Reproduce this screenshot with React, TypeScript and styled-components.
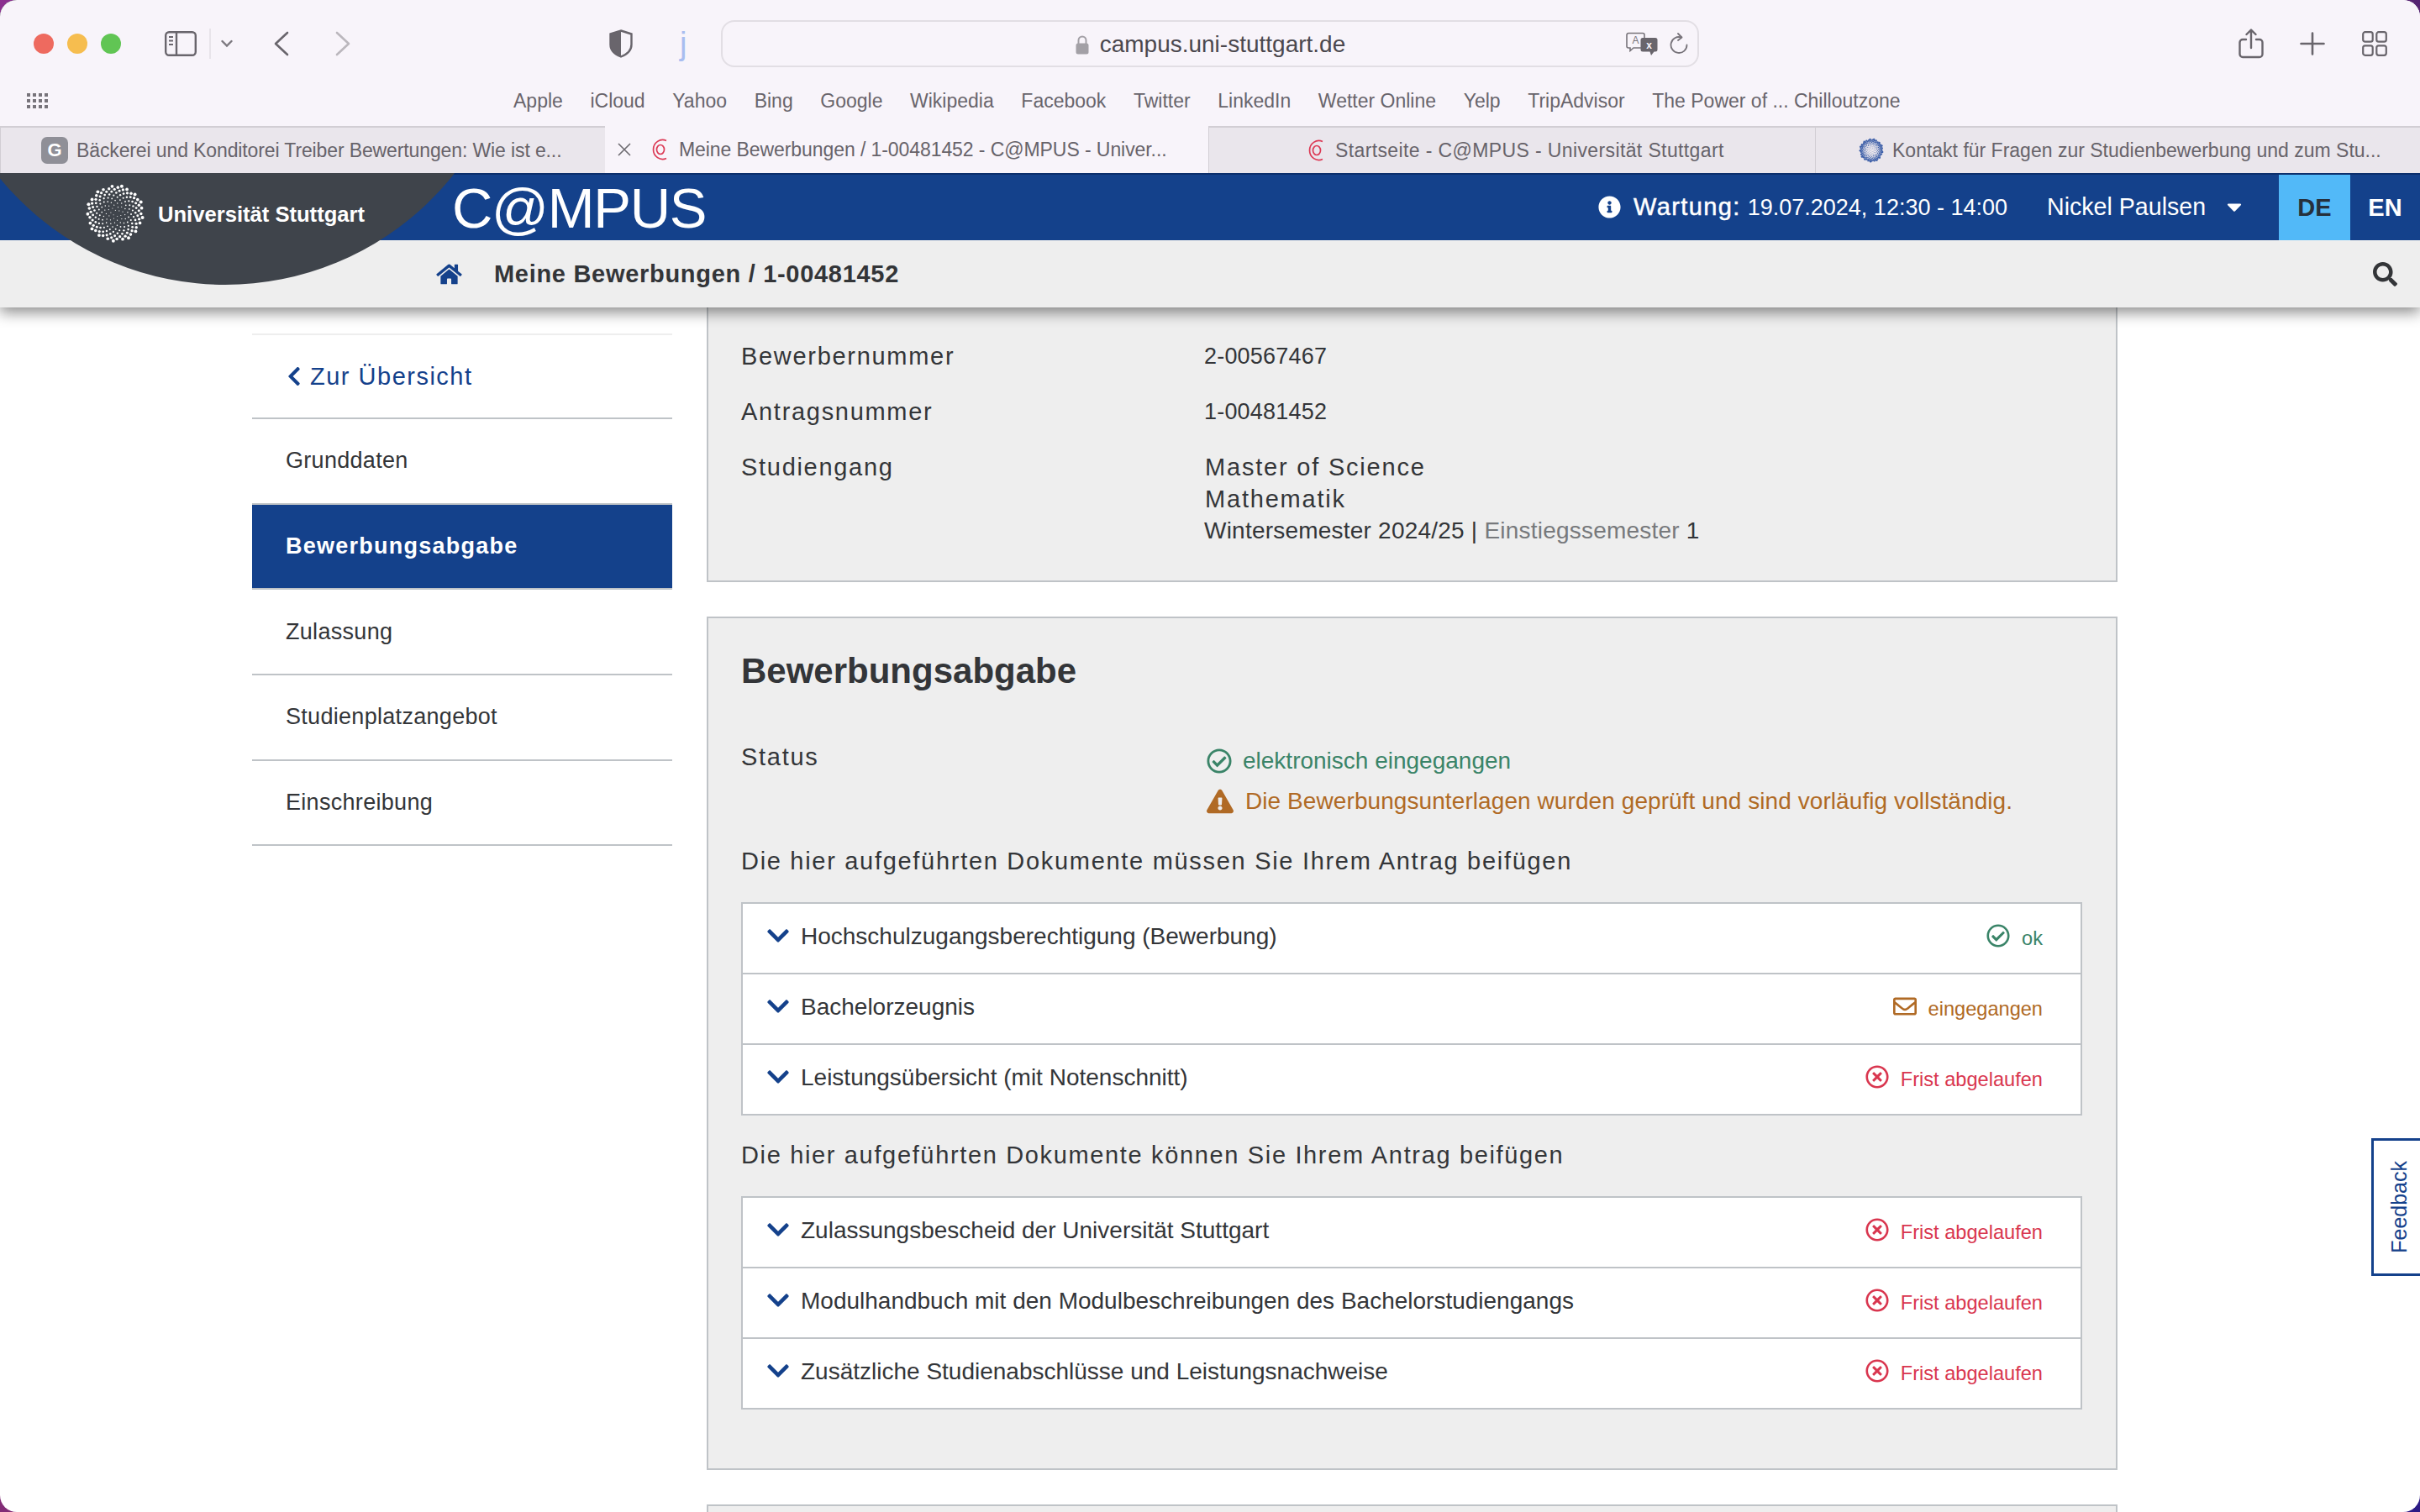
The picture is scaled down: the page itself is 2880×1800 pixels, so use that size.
import React from "react";
import styled, { createGlobalStyle } from "styled-components";
import {
  FaHome,
  FaInfoCircle,
  FaSearch,
  FaCaretDown,
  FaChevronDown,
  FaChevronLeft,
  FaExclamationTriangle,
  FaRegCheckCircle,
  FaRegTimesCircle,
  FaRegEnvelope,
} from "react-icons/fa";

const BLUE = "#14418b";
const LINE = "#bfc3c7";
const GREEN = "#3a8468";
const ORANGE = "#b06a25";
const RED = "#d9364f";
const TEXT = "#333538";
const SAFARI_ICON = "#69656c";

type Tone = "ok" | "warn" | "bad";
const toneColor = (t: Tone) => (t === "ok" ? GREEN : t === "warn" ? ORANGE : RED);

const GlobalStyle = createGlobalStyle`
  html, body {
    margin: 0;
    padding: 0;
    width: 2880px;
    height: 1800px;
    overflow: hidden;
    background: linear-gradient(120deg, #8b2f8f 0%, #7a2a60 50%, #2b1a85 100%);
  }
  * { box-sizing: border-box; }
`;

const Window = styled.div`
  position: relative;
  width: 2880px;
  height: 1800px;
  border-radius: 20px;
  overflow: hidden;
  background: #fff;
  display: flex;
  flex-direction: column;
  font-family: "Liberation Sans", Arial, sans-serif;
  color: ${TEXT};
`;

/* safari chrome */
const Chrome = styled.div`
  position: relative;
  z-index: 3;
  background: #f8f4fa;
`;
const ToolRow = styled.div`
  height: 104px;
  display: flex;
  align-items: center;
  padding-left: 40px;
`;
const Lights = styled.div`
  display: flex;
  gap: 16px;
  width: 156px;
`;
const Light = styled.span<{ $color: string }>`
  width: 24px;
  height: 24px;
  border-radius: 50%;
  background: ${({ $color }) => $color};
`;
const Slot = styled.div<{ $x: number }>`
  display: flex;
  align-items: center;
  margin-left: ${({ $x }) => $x}px;
`;
const Divider = styled.span`
  width: 2px;
  height: 36px;
  background: #e8e4ea;
`;
const ExtensionJ = styled.span`
  font-size: 38px;
  line-height: 1;
  color: #a9bdf0;
  font-family: "Liberation Sans", sans-serif;
`;
const UrlBar = styled.div`
  width: 1164px;
  height: 56px;
  margin-left: 41px;
  border: 2.5px solid #e2dee4;
  border-radius: 16px;
  display: grid;
  grid-template-columns: 1fr auto 1fr;
  align-items: center;
`;
const UrlCenter = styled.div`
  display: flex;
  align-items: center;
  gap: 13px;
  padding-top: 2px;
  font-size: 28px;
  color: #4b484e;
`;
const UrlTools = styled.div`
  justify-self: end;
  display: flex;
  align-items: center;
  gap: 14px;
  padding-right: 11px;
`;
const BookmarkRow = styled.div`
  height: 46px;
  display: flex;
  align-items: center;
  padding: 0 0 14px 32px;
`;
const BookmarkList = styled.div`
  display: flex;
  gap: 32.6px;
  margin-left: 554px;
  font-size: 23px;
  color: #69656c;
`;
const TabStrip = styled.div`
  display: grid;
  grid-template-columns: 720px 718px 722px 720px;
  height: 56px;
`;
const Tab = styled.div<{ $active?: boolean; $pad: number; $ls: number }>`
  display: flex;
  align-items: center;
  gap: 10px;
  padding-left: ${({ $pad }) => $pad}px;
  font-size: 23px;
  letter-spacing: ${({ $ls }) => $ls}px;
  white-space: nowrap;
  color: #67636a;
  background: ${({ $active }) => ($active ? "#f8f4fa" : "#eae6ec")};
  border-top: ${({ $active }) => ($active ? "none" : "2px solid #d2ced4")};
  border-left: ${({ $active }) => ($active ? "none" : "1.5px solid #d2ced4")};
`;
const CloseSlot = styled.span`
  display: flex;
  margin-right: 13px;
`;
const GoogleFav = styled.span`
  width: 32px;
  height: 32px;
  border-radius: 7px;
  background: #8f8f97;
  color: #fff;
  font-size: 22px;
  font-weight: bold;
  display: flex;
  align-items: center;
  justify-content: center;
`;

/* site header */
const Header = styled.header`
  position: relative;
  z-index: 1;
  box-shadow: 0 6px 16px rgba(0, 0, 0, 0.45);
`;
const BlueBar = styled.div`
  height: 80px;
  background: ${BLUE};
  border-top: 2px solid #0c2f6c;
  display: flex;
  align-items: stretch;
  color: #fff;
`;
const Brand = styled.div`
  position: relative;
  z-index: 2;
  margin-left: 538px;
  font-size: 67px;
  line-height: 80px;
  letter-spacing: -1.3px;
`;
const Maintenance = styled.div`
  margin-left: auto;
  display: flex;
  align-items: center;
  gap: 15px;
  font-size: 27px;
  padding-bottom: 2px;
`;
const InfoIcon = styled(FaInfoCircle)`
  width: 27px;
  height: 27px;
`;
const MaintLabel = styled.span`
  font-size: 29px;
  letter-spacing: 1.4px;
  -webkit-text-stroke: 0.5px #fff;
  margin-right: 8px;
`;
const UserMenu = styled.div`
  display: flex;
  align-items: center;
  font-size: 28.6px;
  margin-left: 47px;
  width: 276px;
  padding-bottom: 2px;
`;
const CaretIcon = styled(FaCaretDown)`
  width: 22px;
  height: 28px;
  margin-left: 23px;
`;
const Lang = styled.div<{ $active?: boolean }>`
  width: ${({ $active }) => ($active ? 85 : 83)}px;
  display: flex;
  align-items: center;
  justify-content: center;
  font-size: 29px;
  font-weight: bold;
  background: ${({ $active }) => ($active ? "#52b9f8" : "transparent")};
  color: ${({ $active }) => ($active ? "#26303c" : "#fff")};
`;
const NavBar = styled.div`
  height: 80px;
  background: #eee;
  display: flex;
  align-items: center;
  padding: 0 27px 0 518px;
`;
const HomeIcon = styled(FaHome)`
  width: 33px;
  height: 27px;
  color: ${BLUE};
`;
const Crumb = styled.div`
  margin-left: 37px;
  font-size: 29px;
  font-weight: bold;
  letter-spacing: 0.7px;
`;
const SearchIcon = styled(FaSearch)`
  margin-left: auto;
  width: 29px;
  height: 29px;
`;
const LogoCap = styled.div`
  position: absolute;
  left: -79px;
  top: -561px;
  width: 694px;
  height: 694px;
  border-radius: 50%;
  background: #3f444b;
`;
const LogoMark = styled.div`
  position: absolute;
  left: 102px;
  top: 13px;
  display: flex;
  align-items: center;
  gap: 16px;
  color: #fff;
  font-size: 25.6px;
  font-weight: bold;
`;
const LogoText = styled.span`
  padding-top: 2px;
`;

/* page */
const Main = styled.main`
  flex: 1;
  display: flex;
  padding-left: 300px;
  overflow: hidden;
`;
const Side = styled.nav`
  width: 500px;
  margin-top: 31px;
  border-top: 2px solid #eee;
  align-self: flex-start;
`;
const SideRow = styled.div<{ $active?: boolean }>`
  height: 101.7px;
  display: flex;
  align-items: center;
  padding-left: 40px;
  font-size: 27px;
  letter-spacing: ${({ $active }) => ($active ? 1.25 : 0.3)}px;
  font-weight: ${({ $active }) => ($active ? "bold" : "normal")};
  color: ${({ $active }) => ($active ? "#fff" : TEXT)};
  background: ${({ $active }) => ($active ? BLUE : "transparent")};
  border-bottom: 2px solid ${LINE};
`;
const BackRow = styled(SideRow)`
  height: 100px;
  font-size: 29px;
  letter-spacing: 1.5px;
  color: ${BLUE};
`;
const BackChevron = styled(FaChevronLeft)`
  width: 20px;
  height: 26px;
  margin-right: 9px;
`;
const Content = styled.div`
  margin-left: 41px;
  width: 1679px;
  display: flex;
  flex-direction: column;
  gap: 41px;
`;
const Card = styled.section<{ $flushTop?: boolean; $pb: number }>`
  background: #eee;
  border: 2px solid ${LINE};
  border-top: ${({ $flushTop }) => ($flushTop ? "none" : `2px solid ${LINE}`)};
  padding: 39px 40px ${({ $pb }) => $pb}px 39px;
  flex-shrink: 0;
`;
const Field = styled.div`
  display: grid;
  grid-template-columns: 551px 1fr;
  font-size: 27px;
  line-height: 38px;
  letter-spacing: 0.2px;
  margin-bottom: 28px;
  &:last-child { margin-bottom: 0; }
`;
const FieldLabel = styled.div`
  font-size: 29px;
  letter-spacing: 1.7px;
`;
const StrongLine = styled.div`
  font-size: 29px;
  letter-spacing: 1.8px;
  padding-left: 1px;
`;
const SemesterLine = styled.div`
  font-size: 28px;
  letter-spacing: 0.22px;
`;
const Muted = styled.span`
  color: #77797c;
`;
const Title = styled.h2`
  margin: -1px 0 0;
  font-size: 42px;
  line-height: 50px;
  font-weight: bold;
`;
const StatusBlock = styled.div`
  display: grid;
  grid-template-columns: 551px 1fr;
  margin-top: 61px;
`;
const StatusLines = styled.div`
  display: flex;
  flex-direction: column;
  gap: 10px;
  padding: 2px 0 0 2px;
`;
const StatusLine = styled.div<{ $tone: Tone }>`
  display: flex;
  align-items: center;
  font-size: 28px;
  line-height: 38px;
  letter-spacing: ${({ $tone }) => ($tone === "warn" ? 0.08 : 0)}px;
  color: ${({ $tone }) => toneColor($tone)};
  svg {
    width: 32px;
    height: 30px;
    flex-shrink: 0;
    margin-left: ${({ $tone }) => ($tone === "warn" ? 1 : 0)}px;
    margin-right: ${({ $tone }) => ($tone === "warn" ? 14 : 12)}px;
  }
`;
const DocHeading = styled.h3<{ $second?: boolean }>`
  margin: ${({ $second }) => ($second ? "28px" : "33px")} 0 0;
  font-size: 29px;
  line-height: 38px;
  font-weight: normal;
  letter-spacing: ${({ $second }) => ($second ? 1.65 : 1.7)}px;
`;
const DocTable = styled.div`
  margin-top: 30px;
  background: #fff;
  border: 2px solid ${LINE};
`;
const DocRow = styled.div`
  height: 84px;
  display: flex;
  align-items: center;
  padding: 0 45px 0 29px;
  font-size: 28px;
  border-bottom: 2px solid ${LINE};
  &:last-child { height: 82px; border-bottom: none; }
`;
const RowChevron = styled(FaChevronDown)`
  width: 26px;
  height: 30px;
  color: ${BLUE};
  margin: -6px 14px 0 0;
`;
const RowLabel = styled.span`
  margin-top: -4px;
`;
const DocStatus = styled.div<{ $tone: Tone }>`
  margin-left: auto;
  display: flex;
  align-items: center;
  gap: 14px;
  font-size: 23.6px;
  color: ${({ $tone }) => toneColor($tone)};
  svg { width: 28px; height: 28px; margin-top: -6px; }
`;
const Feedback = styled.div`
  position: absolute;
  z-index: 2;
  right: 0;
  top: 1355px;
  width: 58px;
  height: 164px;
  background: #fff;
  border: 3px solid ${BLUE};
  border-right: none;
  color: ${BLUE};
  display: flex;
  align-items: center;
  justify-content: center;
  padding-left: 6px;
`;
const FeedbackText = styled.span`
  font-size: 25px;
  writing-mode: vertical-rl;
  transform: rotate(180deg);
`;

/* drawings */
const SpiralLogo = ({ size, color, count, weight }: { size: number; color: string; count: number; weight: number }) => {
  const c = size / 2;
  const dots = Array.from({ length: count }, (_, i) => {
    const t = (i + 1) / count;
    const r = (size / 2 - 1.5) * Math.sqrt(t);
    const a = (i + 1) * 2.39996;
    return (
      <circle
        key={i}
        cx={c + r * Math.cos(a)}
        cy={c + r * Math.sin(a)}
        r={(size / 70) * (0.5 + 1.5 * t) * weight}
        fill={color}
      />
    );
  });
  return (
    <svg width={size} height={size} viewBox={`0 0 ${size} ${size}`}>
      {dots}
    </svg>
  );
};

const CampusFav = () => (
  <svg width="24" height="26" viewBox="0 0 24 26" fill="none" stroke="#dc3a55" strokeWidth="1.7">
    <path d="M19 2.5A11 11.5 0 1 0 19 23.5" />
    <ellipse cx="12" cy="13" rx="4.5" ry="5.5" />
  </svg>
);

const CloseGlyph = () => (
  <svg width="16" height="16" viewBox="0 0 16 16" stroke="#6d6a70" strokeWidth="1.6">
    <path d="M1 1l14 14M15 1L1 15" />
  </svg>
);

const SidebarGlyph = () => (
  <svg width="38" height="30" viewBox="0 0 38 30" fill="none" stroke={SAFARI_ICON} strokeWidth="2.4">
    <rect x="1.2" y="1.2" width="35.6" height="27.6" rx="4" />
    <path d="M14 1v28" />
    <path d="M5 7h5M5 11.5h5M5 16h5" strokeWidth="1.8" />
  </svg>
);

const SmallChevron = () => (
  <svg width="14" height="10" viewBox="0 0 14 10" fill="none" stroke="#7c787f" strokeWidth="2.4" strokeLinecap="round">
    <path d="M1.5 2l5.5 5.5L12.5 2" />
  </svg>
);

const NavArrow = ({ back }: { back?: boolean }) => (
  <svg width="18" height="30" viewBox="0 0 18 30" fill="none" stroke={back ? SAFARI_ICON : "#bbb7bd"} strokeWidth="2.6" strokeLinecap="round" strokeLinejoin="round">
    <path d={back ? "M16 2L2 15l14 13" : "M2 2l14 13L2 28"} />
  </svg>
);

const ShieldGlyph = () => (
  <svg width="28" height="34" viewBox="0 0 28 34">
    <path d="M14 1.5L26.5 5.5V18c0 7-6 12-12.5 14.5C7.5 30 1.5 25 1.5 18V5.5z" fill="none" stroke={SAFARI_ICON} strokeWidth="2.4" />
    <path d="M14 1.5L1.5 5.5V18c0 7 6 12 12.5 14.5z" fill={SAFARI_ICON} />
  </svg>
);

const LockGlyph = () => (
  <svg width="16" height="23" viewBox="0 0 16 23">
    <path d="M3.5 10V6a4.5 4.5 0 0 1 9 0v4" fill="none" stroke="#a3a0a6" strokeWidth="2" />
    <rect x="0.5" y="9.5" width="15" height="13" rx="2.5" fill="#a3a0a6" />
  </svg>
);

const TranslateGlyph = () => (
  <svg width="38" height="28" viewBox="0 0 38 28">
    <path d="M3 1.5h17a2 2 0 0 1 2 2V17a2 2 0 0 1-2 2H9l-4 3.5V19H3a2 2 0 0 1-2-2V3.5a2 2 0 0 1 2-2z" fill="#f8f4fa" stroke="#77737a" strokeWidth="1.6" />
    <text x="11.5" y="14" fontSize="12" textAnchor="middle" fill="#77737a" fontFamily="Liberation Sans">A</text>
    <path d="M20 7h15a2.5 2.5 0 0 1 2.5 2.5V21a2.5 2.5 0 0 1-2.5 2.5h-1.5L30 28l-1.5-4.5H20a2.5 2.5 0 0 1-2.5-2.5V9.5A2.5 2.5 0 0 1 20 7z" fill="#69656c" />
    <text x="27.5" y="20" fontSize="12" fontWeight="bold" textAnchor="middle" fill="#f8f4fa" fontFamily="Liberation Sans">x</text>
  </svg>
);

const ReloadGlyph = () => (
  <svg width="22" height="26" viewBox="0 0 22 26" fill="none" stroke="#77737a" strokeWidth="1.8" strokeLinecap="round" strokeLinejoin="round">
    <path d="M14 5.5A9.5 9.5 0 1 0 20.5 14.5" />
    <path d="M10 1l4.5 4.5L10 9" />
  </svg>
);

const ShareGlyph = () => (
  <svg width="30" height="36" viewBox="0 0 30 36" fill="none" stroke={SAFARI_ICON} strokeWidth="2.4" strokeLinecap="round" strokeLinejoin="round">
    <path d="M9 13H5a3.5 3.5 0 0 0-3.5 3.5v14A3.5 3.5 0 0 0 5 34h20a3.5 3.5 0 0 0 3.5-3.5v-14A3.5 3.5 0 0 0 25 13h-4" />
    <path d="M15 23V2M9.5 7L15 1.5 20.5 7" />
  </svg>
);

const PlusGlyph = () => (
  <svg width="30" height="28" viewBox="0 0 30 28" stroke={SAFARI_ICON} strokeWidth="2.6" strokeLinecap="round">
    <path d="M15 1.5v25M1.5 14h27" />
  </svg>
);

const TabsGlyph = () => (
  <svg width="30" height="30" viewBox="0 0 30 30" fill="none" stroke={SAFARI_ICON} strokeWidth="2.2">
    <rect x="1.2" y="1.2" width="11.5" height="11.5" rx="2.5" />
    <rect x="17.3" y="1.2" width="11.5" height="11.5" rx="2.5" />
    <rect x="1.2" y="17.3" width="11.5" height="11.5" rx="2.5" />
    <rect x="17.3" y="17.3" width="11.5" height="11.5" rx="2.5" />
  </svg>
);

const AppsGlyph = () => (
  <svg width="25" height="18" viewBox="0 0 25 18" fill="#77737a">
    {[0, 7, 14].map((y) =>
      [0, 7, 14, 21].map((x) => <rect key={`${x}-${y}`} x={x} y={y} width="4" height="4" />)
    )}
  </svg>
);

const bookmarks = [
  "Apple", "iCloud", "Yahoo", "Bing", "Google", "Wikipedia", "Facebook", "Twitter",
  "LinkedIn", "Wetter Online", "Yelp", "TripAdvisor", "The Power of ... Chilloutzone",
];
const sideItems = ["Grunddaten", "Bewerbungsabgabe", "Zulassung", "Studienplatzangebot", "Einschreibung"];

interface Doc {
  name: string;
  status: string;
  tone: Tone;
}
const required: Doc[] = [
  { name: "Hochschulzugangsberechtigung (Bewerbung)", status: "ok", tone: "ok" },
  { name: "Bachelorzeugnis", status: "eingegangen", tone: "warn" },
  { name: "Leistungsübersicht (mit Notenschnitt)", status: "Frist abgelaufen", tone: "bad" },
];
const optional: Doc[] = [
  { name: "Zulassungsbescheid der Universität Stuttgart", status: "Frist abgelaufen", tone: "bad" },
  { name: "Modulhandbuch mit den Modulbeschreibungen des Bachelorstudiengangs", status: "Frist abgelaufen", tone: "bad" },
  { name: "Zusätzliche Studienabschlüsse und Leistungsnachweise", status: "Frist abgelaufen", tone: "bad" },
];

const DocList = ({ docs }: { docs: Doc[] }) => (
  <DocTable>
    {docs.map((d) => (
      <DocRow key={d.name}>
        <RowChevron />
        <RowLabel>{d.name}</RowLabel>
        <DocStatus $tone={d.tone}>
          {d.tone === "ok" ? <FaRegCheckCircle /> : d.tone === "warn" ? <FaRegEnvelope /> : <FaRegTimesCircle />}
          {d.status}
        </DocStatus>
      </DocRow>
    ))}
  </DocTable>
);

const App = () => {
  return (
    <Window>
      <GlobalStyle />
      <Chrome>
        <ToolRow>
          <Lights>
            <Light $color="#ee6a5f" />
            <Light $color="#f6bd4f" />
            <Light $color="#61c554" />
          </Lights>
          <SidebarGlyph />
          <Slot $x={15}><Divider /></Slot>
          <Slot $x={12}><SmallChevron /></Slot>
          <Slot $x={49}><NavArrow back /></Slot>
          <Slot $x={55}><NavArrow /></Slot>
          <Slot $x={308}><ShieldGlyph /></Slot>
          <Slot $x={56}><ExtensionJ>j</ExtensionJ></Slot>
          <UrlBar>
            <span />
            <UrlCenter>
              <LockGlyph />
              campus.uni-stuttgart.de
            </UrlCenter>
            <UrlTools>
              <TranslateGlyph />
              <ReloadGlyph />
            </UrlTools>
          </UrlBar>
          <Slot $x={642}><ShareGlyph /></Slot>
          <Slot $x={43}><PlusGlyph /></Slot>
          <Slot $x={44}><TabsGlyph /></Slot>
        </ToolRow>
        <BookmarkRow>
          <AppsGlyph />
          <BookmarkList>
            {bookmarks.map((b) => (
              <span key={b}>{b}</span>
            ))}
          </BookmarkList>
        </BookmarkRow>
        <TabStrip>
          <Tab $pad={48} $ls={-0.12}>
            <GoogleFav>G</GoogleFav>
            Bäckerei und Konditorei Treiber Bewertungen: Wie ist e...
          </Tab>
          <Tab $active $pad={15} $ls={-0.08}>
            <CloseSlot><CloseGlyph /></CloseSlot>
            <CampusFav />
            Meine Bewerbungen / 1-00481452 - C@MPUS - Univer...
          </Tab>
          <Tab $pad={116} $ls={0.38}>
            <CampusFav />
            Startseite - C@MPUS - Universität Stuttgart
          </Tab>
          <Tab $pad={51} $ls={0}>
            <SpiralLogo size={30} color="#3d5fa8" count={170} weight={1.5} />
            Kontakt für Fragen zur Studienbewerbung und zum Stu...
          </Tab>
        </TabStrip>
      </Chrome>

      <Header>
        <BlueBar>
          <Brand>C@MPUS</Brand>
          <Maintenance>
            <InfoIcon />
            <span>
              <MaintLabel>Wartung:</MaintLabel>19.07.2024, 12:30 - 14:00
            </span>
          </Maintenance>
          <UserMenu>
            Nickel Paulsen
            <CaretIcon />
          </UserMenu>
          <Lang $active>DE</Lang>
          <Lang>EN</Lang>
        </BlueBar>
        <NavBar>
          <HomeIcon />
          <Crumb>Meine Bewerbungen / 1-00481452</Crumb>
          <SearchIcon />
        </NavBar>
        <LogoCap />
        <LogoMark>
          <SpiralLogo size={70} color="#fff" count={170} weight={1} />
          <LogoText>Universität Stuttgart</LogoText>
        </LogoMark>
      </Header>

      <Main>
        <Side>
          <BackRow>
            <BackChevron />
            Zur Übersicht
          </BackRow>
          {sideItems.map((s) => (
            <SideRow key={s} $active={s === "Bewerbungsabgabe"}>
              {s}
            </SideRow>
          ))}
        </Side>
        <Content>
          <Card $flushTop $pb={40}>
            <Field>
              <FieldLabel>Bewerbernummer</FieldLabel>
              <div>2-00567467</div>
            </Field>
            <Field>
              <FieldLabel>Antragsnummer</FieldLabel>
              <div>1-00481452</div>
            </Field>
            <Field>
              <FieldLabel>Studiengang</FieldLabel>
              <div>
                <StrongLine>Master of Science</StrongLine>
                <StrongLine>Mathematik</StrongLine>
                <SemesterLine>
                  Wintersemester 2024/25 | <Muted>Einstiegssemester</Muted> 1
                </SemesterLine>
              </div>
            </Field>
          </Card>
          <Card $pb={70}>
            <Title>Bewerbungsabgabe</Title>
            <StatusBlock>
              <FieldLabel>Status</FieldLabel>
              <StatusLines>
                <StatusLine $tone="ok">
                  <FaRegCheckCircle />
                  elektronisch eingegangen
                </StatusLine>
                <StatusLine $tone="warn">
                  <FaExclamationTriangle />
                  Die Bewerbungsunterlagen wurden geprüft und sind vorläufig vollständig.
                </StatusLine>
              </StatusLines>
            </StatusBlock>
            <DocHeading>Die hier aufgeführten Dokumente müssen Sie Ihrem Antrag beifügen</DocHeading>
            <DocList docs={required} />
            <DocHeading $second>Die hier aufgeführten Dokumente können Sie Ihrem Antrag beifügen</DocHeading>
            <DocList docs={optional} />
          </Card>
          <Card $pb={40} />
        </Content>
      </Main>
      <Feedback>
        <FeedbackText>Feedback</FeedbackText>
      </Feedback>
    </Window>
  );
};

export default App;
